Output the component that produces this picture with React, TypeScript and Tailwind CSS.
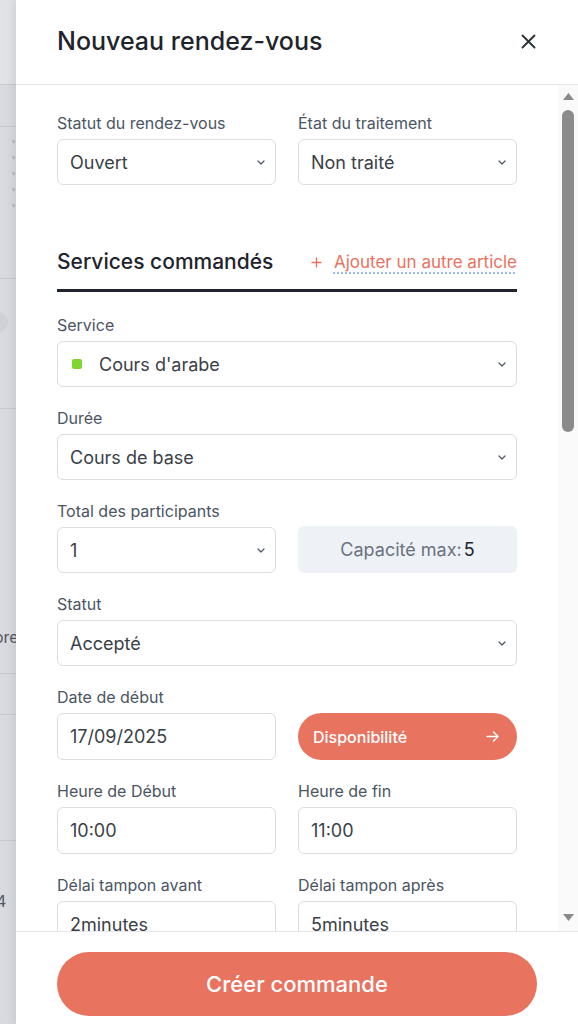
import React from 'react';

const font = { fontFamily: 'Inter, "Noto Sans", sans-serif' };

function Chevron() {
  return (
    <svg width="8" height="5" viewBox="0 0 8 5" fill="none" className="shrink-0">
      <path d="M1 1l3 3 3-3" stroke="#4b5563" strokeWidth="1.2" strokeLinecap="round" strokeLinejoin="round" />
    </svg>
  );
}

function Label({ children }: { children: React.ReactNode }) {
  return <div className="mb-1.5 text-[16px] leading-5 text-[#4b5563]">{children}</div>;
}

function Select({ value, dot }: { value: string; dot?: boolean }) {
  return (
    <div className="flex h-[46px] items-center justify-between rounded-md border border-[#dcdde3] bg-white pl-3 pr-[10px]">
      <div className="flex items-center gap-[17px]">
        {dot && <span className="ml-[2px] h-[10px] w-[10px] rounded-[2px] bg-[#7ed62e]" />}
        <span className="text-[18px] text-[#3a3f47]">{value}</span>
      </div>
      <Chevron />
    </div>
  );
}

function Input({ value }: { value: string }) {
  return (
    <div className="flex h-[47px] items-center rounded-md border border-[#dcdde3] bg-white px-3 text-[18px] text-[#3a3f47]">
      {value}
    </div>
  );
}

function Field({ label, children }: { label: string; children: React.ReactNode }) {
  return (
    <div>
      <Label>{label}</Label>
      {children}
    </div>
  );
}

function Backdrop() {
  return (
    <div className="flex w-4 shrink-0 flex-col overflow-hidden bg-[#d8dadf] text-[#55585e]">
      <div className="h-[85px] shrink-0 border-b border-[#c6c8cd] bg-[#e1e2e5]" />
      <div className="h-[42px] shrink-0 border-b border-[#c6c8cd]" />
      <div className="flex h-[152px] shrink-0 flex-col items-end gap-[13px] border-b border-[#c6c8cd] pt-[13px] pr-[1px]">
        <span className="h-[3px] w-[3px] rounded-full bg-[#b7b9be]" />
        <span className="h-[3px] w-[3px] rounded-full bg-[#b7b9be]" />
        <span className="h-[3px] w-[3px] rounded-full bg-[#b7b9be]" />
        <span className="h-[3px] w-[3px] rounded-full bg-[#b7b9be]" />
        <span className="h-[3px] w-[3px] rounded-full bg-[#b7b9be]" />
      </div>
      <div className="h-[130px] shrink-0 border-b border-[#c6c8cd] pt-[33px]">
        <div className="-ml-3 h-5 w-5 rounded-full bg-[#cfd1d6]" />
      </div>
      <div className="h-[265px] shrink-0 overflow-hidden border-b border-[#c6c8cd] pt-[218px]">
        <div className="-ml-[6px] whitespace-nowrap text-[16px] leading-5">ore</div>
      </div>
      <div className="h-[41px] shrink-0 border-b border-[#c6c8cd]" />
      <div className="h-[126px] shrink-0 border-b border-[#c6c8cd]" />
      <div className="pt-[50px]">
        <div className="-ml-[4px] text-[16px] leading-5">4</div>
      </div>
    </div>
  );
}

function Scrollbar() {
  return (
    <div className="flex w-[20px] shrink-0 flex-col items-center bg-[#fafafa] pb-[10px] pt-[8px]">
      <svg width="11" height="7" viewBox="0 0 11 7">
        <path d="M5.5 0L11 7H0z" fill="#8a8a8a" />
      </svg>
      <div className="mt-[10px] h-[322px] w-[12px] rounded-full bg-[#8b8b8b]" />
      <div className="flex-1" />
      <svg width="11" height="7" viewBox="0 0 11 7">
        <path d="M0 0h11L5.5 7z" fill="#8a8a8a" />
      </svg>
    </div>
  );
}

export default function App() {
  return (
    <div className="flex h-[1024px] w-[578px] overflow-hidden bg-white" style={font}>
      <Backdrop />
      <div className="flex min-w-0 flex-1 flex-col bg-white shadow-[-3px_0_8px_rgba(0,0,0,0.08)]">
        <div className="flex h-[85px] shrink-0 items-center justify-between border-b border-[#e5e7eb] pl-[41px] pr-[42px]">
          <h1 className="text-[25px] font-medium text-[#1f242c]">Nouveau rendez-vous</h1>
          <svg width="15" height="15" viewBox="0 0 15 15" className="mb-[2px]">
            <path d="M1.5 1.5l12 12M13.5 1.5l-12 12" stroke="#2a2f36" strokeWidth="1.8" strokeLinecap="round" />
          </svg>
        </div>

        <div className="flex min-h-0 flex-1">
          <div className="min-w-0 flex-1 overflow-hidden pl-[41px] pr-[41px] pt-[28px]">
            <div className="grid grid-cols-2 gap-x-[22px]">
              <Field label="Statut du rendez-vous">
                <Select value="Ouvert" />
              </Field>
              <Field label="État du traitement">
                <Select value="Non traité" />
              </Field>
            </div>

            <div className="mt-[63px] flex items-end justify-between border-b-[3px] border-[#1f242c] pb-[13px]">
              <h2 className="text-[21px] font-medium leading-7 text-[#1f242c]">Services commandés</h2>
              <div className="flex items-center gap-[12px] pb-[1px] text-[17px] text-[#e8725f]">
                <svg width="11" height="11" viewBox="0 0 11 11" className="mt-[1px]">
                  <path d="M5.5 0.5v10M0.5 5.5h10" stroke="#e8725f" strokeWidth="1.4" />
                </svg>
                <span className="underline decoration-[#7aa7f0] decoration-dotted underline-offset-[5px]">
                  Ajouter un autre article
                </span>
              </div>
            </div>

            <div className="mt-[23px] flex flex-col gap-[21px]">
              <Field label="Service">
                <Select value="Cours d'arabe" dot />
              </Field>
              <Field label="Durée">
                <Select value="Cours de base" />
              </Field>
              <div className="grid grid-cols-2 gap-x-[22px]">
                <Field label="Total des participants">
                  <Select value="1" />
                </Field>
                <div className="flex flex-col justify-end">
                  <div className="flex h-[47px] items-center justify-center rounded-md bg-[#eef1f6] text-[18px]">
                    <span className="text-[#6b7280]">Capacité max:</span>
                    <span className="ml-[2px] text-[#1f242c]">5</span>
                  </div>
                </div>
              </div>
              <Field label="Statut">
                <Select value="Accepté" />
              </Field>
              <div className="grid grid-cols-2 gap-x-[22px]">
                <Field label="Date de début">
                  <Input value="17/09/2025" />
                </Field>
                <div className="flex flex-col justify-end">
                  <div className="flex h-[47px] items-center justify-between rounded-full bg-[#e8735f] pl-[15px] pr-[18px] text-white">
                    <span className="text-[16px] font-medium">Disponibilité</span>
                    <svg width="13" height="11" viewBox="0 0 13 11" fill="none">
                      <path d="M1 5.5h11M7.5 1l4.5 4.5L7.5 10" stroke="white" strokeWidth="1.5" strokeLinecap="round" strokeLinejoin="round" />
                    </svg>
                  </div>
                </div>
              </div>
              <div className="grid grid-cols-2 gap-x-[22px]">
                <Field label="Heure de Début">
                  <Input value="10:00" />
                </Field>
                <Field label="Heure de fin">
                  <Input value="11:00" />
                </Field>
              </div>
              <div className="grid grid-cols-2 gap-x-[22px]">
                <Field label="Délai tampon avant">
                  <Input value="2minutes" />
                </Field>
                <Field label="Délai tampon après">
                  <Input value="5minutes" />
                </Field>
              </div>
            </div>
          </div>
          <Scrollbar />
        </div>

        <div className="h-[93px] shrink-0 border-t border-[#e5e7eb] pl-[41px] pr-[41px] pt-[20px]">
          <button className="flex h-[64px] w-full items-center justify-center rounded-full bg-[#e8735f] text-[22px] font-medium text-white">
            Créer commande
          </button>
        </div>
      </div>
    </div>
  );
}
